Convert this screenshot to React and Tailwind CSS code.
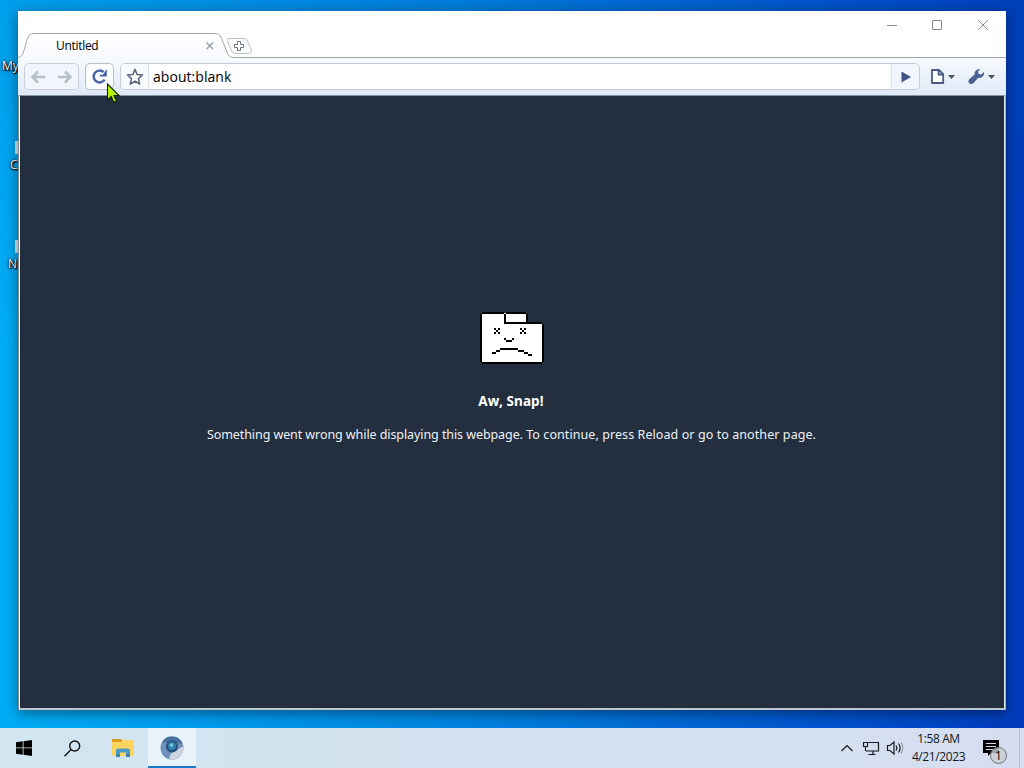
import React from 'react';

const SadFolder = () => (
  <svg width="64" height="52" viewBox="0 0 64 52" shapeRendering="crispEdges">
    <path d="M2 1H46V11H62V50H2Z" fill="#fff" />
    <path d="M2 0H24V2H26V0H46V2H48V10H62V12H64V50H62V52H2V50H0V2H2ZM2 2V50H62V12H24V2ZM26 2V10H46V2Z" fill="#000" fillRule="evenodd" />
    <path d="M14 16h2v2h-2zM18 16h2v2h-2zM16 18h2v2h-2zM14 20h2v2h-2zM18 20h2v2h-2zM40 16h2v2h-2zM44 16h2v2h-2zM42 18h2v2h-2zM40 20h2v2h-2zM44 20h2v2h-2zM24 26h2v2h-2zM26 28h6v2h-6zM32 26h2v2h-2zM20 36h18v2h-18zM16 38h4v2h-4zM12 40h4v2h-4zM38 38h6v2h-6zM44 40h4v2h-4zM48 42h4v2h-4z" fill="#000" />
  </svg>
);

const TitleBar = () => (
  <div className="relative h-[47px] shrink-0 bg-white">
    <svg className="absolute left-0 top-0" width="988" height="47" viewBox="18 11 988 47" fill="none">
      <defs>
        <linearGradient id="tab" x1="0" y1="0" x2="0" y2="1">
          <stop stopColor="#fff" />
          <stop offset="1" stopColor="#f6f9fe" />
        </linearGradient>
      </defs>
      <path d="M18 58C23 56 23 53 25 47C27 39 28 33.5 34 33.5H215C220 33.5 221 37 223 42L227 52C229 57 231 57.5 235 57.5H1006" fill="url(#tab)" />
      <path d="M18 58C23 56 23 53 25 47C27 39 28 33.5 34 33.5H215C220 33.5 221 37 223 42L227 52C229 57 231 57.5 235 57.5H1006" stroke="#a0a4a8" />
      <path d="M229 38.5H243C246 38.5 247 39.5 248 42L251 49C252 52 251 53.5 248 53.5H236C233 53.5 232 52 231 50L228 42C227 40 227 38.5 229 38.5Z" stroke="#bcbfc4" fill="#fafbfd" />
      <path d="M237.5 41.5h3v3h3v3h-3v3h-3v-3h-3v-3h3z" fill="#fff" stroke="#70757d" />
      <path d="M206.500 42.500l6.500 6.500M213 42.500l-6.500 6.500" stroke="#9ba0a4" strokeWidth="1.500" />
    </svg>
    <div className="relative flex h-full items-start justify-between">
      <span className="ml-[38px] mt-[27px] text-[12px] leading-4 tracking-[-0.3px] text-black">Untitled</span>
      <div className="flex h-7 items-center pr-px">
        <svg width="136" height="28" viewBox="869 11 136 28" fill="none" stroke="#8c8c8c">
          <path d="M887 25.500h10M932.500 20.500h9v9h-9z" />
          <path d="M978 20l10 10M988 20l-10 10" />
        </svg>
      </div>
    </div>
  </div>
);

const Toolbar = () => (
  <div className="flex h-[37px] shrink-0 items-start bg-linear-to-b from-[#f7faff] to-[#dfe9f6] pl-[6px] pt-[5px]">
    <div className="flex h-[27px] w-[55px] items-center justify-center gap-[11px] rounded-[5px] border border-[#c9d0dc] bg-[#f2f6fc]">
      <svg width="16" height="14" viewBox="0 0 16 14" fill="none" stroke="#b5bfca" strokeWidth="2.600">
        <path d="M15 7H2.500M8 1.500L2.500 7l5.500 5.500" />
      </svg>
      <svg width="16" height="14" viewBox="0 0 16 14" fill="none" stroke="#b5bfca" strokeWidth="2.600">
        <path d="M1 7h12.500M8 1.500L13.500 7l-5.500 5.500" />
      </svg>
    </div>
    <div className="ml-[6px] flex h-[27px] w-[29px] items-center justify-center rounded-[5px] border border-[#b7bfcd] bg-[#fbfdff]">
      <svg width="17" height="17" viewBox="0 0 17 17" fill="none">
        <path d="M12.600 4.200A5.900 5.900 0 1 0 13.600 11.600" stroke="#4663a5" strokeWidth="2.500" />
        <path d="M15.800 1v7.500H8.800V6.800h3z" fill="#4663a5" />
      </svg>
    </div>
    <div className="ml-[6px] flex h-[27px] w-[800px] overflow-hidden rounded-[5px] border border-[#c3cbd8] bg-white">
      <div className="flex w-[28px] items-center justify-center border-r border-[#dce2ea] bg-[#f8fafd]">
        <svg width="18" height="18" viewBox="0 0 18 18">
          <path d="M9 1.400l2.100 5.200 5.500.4-4.200 3.600 1.300 5.400L9 13.100l-4.700 2.900 1.300-5.400L1.400 7l5.500-.4z" fill="#fff" stroke="#566780" strokeWidth="1.500" strokeLinejoin="round" />
        </svg>
      </div>
      <span className="flex-1 pl-1 text-[14px] leading-[25px] tracking-[0.05px] text-black">about:blank</span>
      <div className="flex w-[28px] items-center justify-center border-l border-[#d9dfe8] bg-[#f1f6fd]">
        <svg width="10" height="12" viewBox="0 0 10 12">
          <path d="M0.500 0.500L10 6L0.500 11.500Z" fill="#405487" />
        </svg>
      </div>
    </div>
    <svg className="ml-[10px]" width="72" height="27" viewBox="930 63 72 27" fill="none">
      <path d="M932 70h7l4.200 4.200v8.800H932zM938.500 70v4.500h4.500" fill="#fff" stroke="#4a5c83" strokeWidth="1.800" strokeLinejoin="round" />
      <path d="M948 75h7l-3.500 4zM988 75h7l-3.500 4z" fill="#4c5360" />
      <path d="M980.500 69.300C976.800 68.400 974 71.200 974.600 74.400L969.200 79.200C968.200 80.200 968.200 82.200 969.300 83.300C970.500 84.400 972.500 84.200 973.500 83L978.300 77.800C982 78.600 984.600 75.500 984 72L981 74.600L978.600 73.900L978 71.600Z" fill="#4b6192" />
    </svg>
  </div>
);

const BrowserWindow = () => (
  <div className="absolute left-[18px] top-[11px] flex h-[699px] w-[988px] flex-col bg-white shadow-[0_3px_12px_rgba(0,0,0,0.45)]">
    <TitleBar />
    <Toolbar />
    <div className="flex flex-1 border-x border-l-[#7b8b96] border-r-[#9db0b4]">
      <div className="flex flex-1 flex-col items-center border-x border-b-2 border-t border-b-[#bdc7cf] border-l-white border-r-[#dce9e6] border-t-[#8795a3] bg-[#232f3e] pt-[216px] text-white">
        <SadFolder />
        <h1 className="mt-[27px] pr-[2px] font-['Noto_Sans'] text-[13.5px] leading-[20px] font-bold tracking-[0.1px]">Aw, Snap!</h1>
        <p className="mt-[14px] pr-px font-['Noto_Sans'] text-[12.5px] leading-[20px] whitespace-nowrap text-[#eef2f6]">
          <span className="tracking-[-0.08px]">Something went wrong while displaying this webpage.</span>{' '}
          <span className="tracking-[0.08px]">To continue, press Reload or go to another page.</span>
        </p>
      </div>
    </div>
  </div>
);

const desktopLabels = [
  { text: 'My', position: 'left-[2px] top-[58px]' },
  { text: 'C', position: 'left-[10px] top-[157px]' },
  { text: 'N', position: 'left-[8px] top-[256px]' },
];

const Desktop = () => (
  <div className="relative h-[728px] overflow-hidden bg-[linear-gradient(90deg,#00adf5_0%,#00a2f0_12%,#0084e0_45%,#0054cc_80%,#003bbb_100%)]">
    <div className="absolute inset-0 bg-linear-to-b from-[#0050b0]/15 via-transparent to-transparent" />
    {desktopLabels.map(({ text, position }) => (
      <span key={text} className={`absolute text-[12px] leading-4 text-white [text-shadow:1px_1px_1px_#000,0_0_2px_#000,0_1px_3px_#000] ${position}`}>
        {text}
      </span>
    ))}
    <div className="absolute left-[15px] top-[141px] h-[13px] w-[3px] bg-[#dceaf2]" />
    <div className="absolute left-[15px] top-[240px] h-[13px] w-[3px] bg-[#dceaf2]" />
    <BrowserWindow />
    <svg className="absolute left-[106px] top-[83px]" width="15" height="22" viewBox="0 0 15 22">
      <path d="M1.500 1v16l3.700-3.500 2.500 5.700 2.700-1.200-2.500-5.500H13z" fill="#b8f500" stroke="#172100" strokeWidth="1.100" />
    </svg>
  </div>
);

const Taskbar = () => (
  <div className="flex h-10 items-center justify-between bg-linear-to-r from-[#d1e6f0] to-[#d5def0]">
    <div className="flex h-full">
      <div className="flex w-12 items-center justify-center">
        <svg width="16" height="16" viewBox="0 0 16 16">
          <path d="M0 2.200L6.700 1.300V7.500H0zM7.500 1.200L16 0V7.500H7.500zM0 8.300H6.700V14.700L0 13.800zM7.500 8.300H16V16L7.500 14.800z" />
        </svg>
      </div>
      <div className="flex w-12 items-center justify-center">
        <svg width="17" height="17" viewBox="0 0 17 17" fill="none" stroke="#111" strokeWidth="1.400">
          <circle cx="10.700" cy="6" r="5" />
          <path d="M7.100 9.600L0.500 16.200" />
        </svg>
      </div>
      <div className="flex w-[52px] items-center justify-center pl-[2px]">
        <svg width="22" height="20" viewBox="0 0 22 20">
          <path d="M0 1h9l2 1h9.500q1.500 0 1.500 1.500V16q0 2-2 2H2q-2 0-2-2z" fill="#ffd45f" />
          <path d="M0 1h9l1 1.500-1 1.500H0z" fill="#d99b22" />
          <path d="M4 19v-6.500q0-2 2-2h10q2 0 2 2V19h-4v-4.500H8V19z" fill="#4a9cc5" />
          <path d="M4 19v-3h4v3zM14 19v-3h4v3z" fill="#3787b4" />
        </svg>
      </div>
      <div className="flex w-12 items-center justify-center border-b-2 border-[#1878c8] bg-[#e7f2f9] pt-[2px]">
        <svg width="24" height="24" viewBox="0 0 24 24">
          <circle cx="12" cy="12" r="11.500" fill="#6f8fbd" />
          <path d="M2 6.200A11.500 11.500 0 0 1 22.500 7.500L12 7z" fill="#4b6f9f" />
          <path d="M9 23.100Q10 16.500 14.500 15.500Q18.500 13.500 23.300 10A11.500 11.500 0 0 1 9 23.100z" fill="#cdd5df" />
          <circle cx="12" cy="10.500" r="6" fill="#244e78" />
          <circle cx="12" cy="10" r="4" fill="#2f83ae" />
          <circle cx="11.500" cy="9" r="1.800" fill="#7ecbe4" />
        </svg>
      </div>
    </div>
    <div className="flex h-full items-center">
      <svg width="66" height="40" viewBox="838 728 66 40" fill="none" stroke="#151a20" strokeWidth="1.200">
        <path d="M841.500 751l5.500-5.500 5.500 5.500" />
        <path d="M868 742.500h10.500v8.500H866M865.500 747v4M873 751v3.500M868.500 754.500h7M863.500 742.500h4v4h-4zM865.500 746.500v4.500" />
        <path d="M887.500 745.500h2.500l4-3.500v12l-4-3.500h-2.500zM896 745.500q1.800 2.500 0 5M898.500 743.500q3.200 4.500 0 9" />
        <path d="M901 742q3.500 6 0 12" stroke="#9aa3ad" />
      </svg>
      <div className="w-[70px] pr-px text-center text-[12px] leading-[18px] tracking-[-0.4px] whitespace-nowrap text-[#111820]">
        <div>1:58 AM</div>
        <div>4/21/2023</div>
      </div>
      <div className="relative ml-[9px] h-full w-[36px]">
        <svg width="26" height="40" viewBox="983 728 26 40">
          <path d="M983 740h16v13h-8l-3 3v-3h-5z" />
          <path d="M986 743.500h10M986 746.500h10M986 749.500h7" stroke="#d5def0" />
        </svg>
        <span className="absolute left-[7px] top-[19px] flex h-[17px] w-[17px] items-center justify-center rounded-full border border-[#6d7176] bg-[#c9cdd2]/80 text-[12px] text-black">1</span>
      </div>
      <div className="h-full w-[5px] border-l border-[#b3bdca]" />
    </div>
  </div>
);

const App = () => (
  <div className="h-[768px] w-[1024px] overflow-hidden font-['Open_Sans','Noto_Sans',sans-serif]">
    <Desktop />
    <Taskbar />
  </div>
);

export default App;
